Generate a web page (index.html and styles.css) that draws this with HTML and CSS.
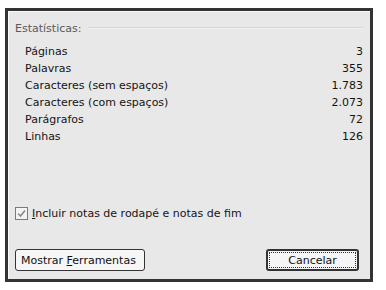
FILE: index.html
```html
<!DOCTYPE html>
<html lang="pt">
<head>
<meta charset="utf-8">
<link rel="stylesheet" href="styles.css">
</head>
<body>
<div class="dialog">
  <div class="group-head">
    <span class="group-title">Estatísticas:</span>
    <span class="group-line"></span>
  </div>
  <div class="stats">
    <div class="row"><span>Páginas</span><span>3</span></div>
    <div class="row"><span>Palavras</span><span>355</span></div>
    <div class="row"><span>Caracteres (sem espaços)</span><span>1.783</span></div>
    <div class="row"><span>Caracteres (com espaços)</span><span>2.073</span></div>
    <div class="row"><span>Parágrafos</span><span>72</span></div>
    <div class="row"><span>Linhas</span><span>126</span></div>
  </div>
  <label class="check">
    <span class="box"><svg width="9" height="9" viewBox="0 0 9 9"><path d="M1 4.5 L3.5 7 L8 1.5" fill="none" stroke="#8a8a8a" stroke-width="1.6"/></svg></span>
    <span><u>I</u>ncluir notas de rodapé e notas de fim</span>
  </label>
  <div class="buttons">
    <button class="btn btn-tools">Mostrar <u>F</u>erramentas</button>
    <button class="btn btn-default"><span class="focus">Cancelar</span></button>
  </div>
</div>
</body>
</html>
```
FILE: styles.css
```css
html, body {
  margin: 0;
  padding: 0;
  background: #ffffff;
}
body {
  padding: 8px 0 0 5px;
  font-family: "DejaVu Sans", "Liberation Sans", sans-serif;
  font-size: 11px;
  color: #141414;
}
.dialog {
  box-sizing: border-box;
  width: 368px;
  height: 274px;
  border: 3px solid #333333;
  box-shadow: inset 1px 1px 0 #fafafa;
  background: #e8e8e8;
  display: flex;
  flex-direction: column;
  padding: 10px 7px 8px 7px;
}
.group-head {
  display: flex;
  align-items: center;
  gap: 7px;
  color: #5a5a5a;
  height: 14px;
}
.group-line {
  flex: 1;
  height: 1px;
  background: #d4d4d4;
  border-bottom: 1px solid #f2f2f2;
}
.stats {
  margin-top: 8px;
  padding-left: 10px;
  display: flex;
  flex-direction: column;
}
.row {
  display: flex;
  justify-content: space-between;
  height: 17px;
  line-height: 17px;
}
.check {
  margin-top: 61px;
  display: flex;
  align-items: center;
  gap: 4px;
  height: 14px;
}
.box {
  box-sizing: border-box;
  width: 13px;
  height: 13px;
  border: 1px solid #7a7a7a;
  background: #f4f4f4;
  display: flex;
  align-items: center;
  justify-content: center;
}
.buttons {
  margin-top: auto;
  display: flex;
  justify-content: space-between;
  padding: 0 4px 0 0;
}
.btn {
  box-sizing: border-box;
  height: 22px;
  font: inherit;
  color: #111;
  background: #f6f6f6;
  border: 1px solid #333;
  border-radius: 3px;
  padding: 0;
  margin: 0;
}
.btn-tools {
  width: 130px;
  text-align: left;
  padding-left: 5px;
}
.btn-default {
  width: 93px;
  border: 2px solid #333;
  padding: 1px;
}
.focus {
  display: flex;
  height: 100%;
  align-items: center;
  justify-content: center;
  border: 1px dotted #333;
  box-sizing: border-box;
}
```
